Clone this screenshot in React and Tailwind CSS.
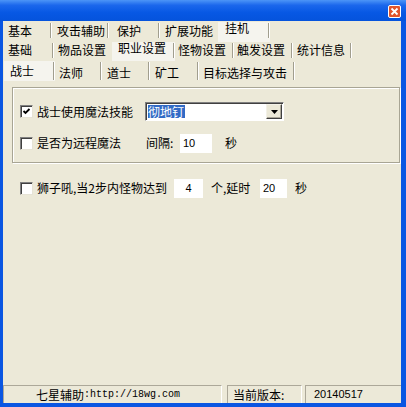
import React from 'react';

const rows = [
  {
    h: 'h-[20px]',
    sep: 'mt-[1px] h-[15px]',
    pt: 'pt-[3px]',
    ptSel: 'pt-[0px]',
    tabs: [
      { label: '基本', w: 'w-[48px]', pl: 'pl-[4px]', sep: true },
      { label: '攻击辅助', w: 'w-[57px]', pl: 'pl-[5px]', sep: true },
      { label: '保护', w: 'w-[51px]', pl: 'pl-[8px]', sep: true },
      { label: '扩展功能', w: 'w-[58px]', pl: 'pl-[5px]' },
      { label: '挂机', w: 'w-[52px]', pl: 'pl-[7px]', sel: true, sep: true },
    ],
  },
  {
    h: 'h-[19px]',
    sep: 'mt-[1px] h-[15px]',
    pt: 'pt-[2px]',
    ptSel: 'pt-[0px]',
    tabs: [
      { label: '基础', w: 'w-[50px]', pl: 'pl-[4px]', sep: true },
      { label: '物品设置', w: 'w-[58px]', pl: 'pl-[4px]' },
      { label: '职业设置', w: 'w-[63px]', pl: 'pl-[6px]', sel: true, sep: true },
      { label: '怪物设置', w: 'w-[59px]', pl: 'pl-[3px]', sep: true },
      { label: '触发设置', w: 'w-[59px]', pl: 'pl-[3px]', sep: true },
      { label: '统计信息', w: 'w-[59px]', pl: 'pl-[4px]', sep: true },
    ],
  },
  {
    h: 'h-[20px]',
    sep: 'mt-[1px] h-[18px]',
    pt: 'pt-[6px]',
    ptSel: 'pt-[4px]',
    tabs: [
      { label: '战士', w: 'w-[51px]', pl: 'pl-[6px]', sel: true, sep: true },
      { label: '法师', w: 'w-[47px]', pl: 'pl-[4px]', sep: true },
      { label: '道士', w: 'w-[48px]', pl: 'pl-[5px]', sep: true },
      { label: '矿工', w: 'w-[49px]', pl: 'pl-[5px]', sep: true },
      { label: '目标选择与攻击', w: 'w-[96px]', pl: 'pl-[4px]', sep: true },
    ],
  },
];

function TabRow({ row }) {
  return (
    <div className={`flex ${row.h}`}>
      {row.tabs.map((t) => (
        <div key={t.label} className={`flex h-full ${t.w} ${t.sel ? 'bg-[#F5F4EE]' : ''}`}>
          <div className={`flex-1 whitespace-nowrap leading-[12px] ${t.pl} ${t.sel ? row.ptSel : row.pt}`}>
            {t.label}
          </div>
          {t.sep && (
            <div className={`flex ${row.sep}`}>
              <div className="w-px bg-[#A19E8E]" />
              <div className="w-px bg-white" />
            </div>
          )}
        </div>
      ))}
    </div>
  );
}

function CheckBox({ checked }) {
  return (
    <div className="w-[13px] h-[13px] shrink-0 bg-white border border-t-[#808080] border-l-[#808080] border-r-[#E6E3D6] border-b-[#E6E3D6] shadow-[inset_1px_1px_0_#404040]">
      {checked && (
        <svg width="11" height="11" viewBox="0 0 11 11">
          <path d="M2.5 5 L4.5 7 L8.5 3" stroke="#000" strokeWidth="1.8" fill="none" />
        </svg>
      )}
    </div>
  );
}

function Edit({ value, w, align }) {
  return (
    <div className={`${w} h-[19px] shrink-0 bg-white flex items-center font-['Liberation_Sans',sans-serif] text-[11px] ${align}`}>
      {value}
    </div>
  );
}

export default function App() {
  return (
    <div className="w-[406px] h-[407px] bg-[#0A56E2] flex flex-col font-['Noto_Sans_CJK_SC',sans-serif] text-[12px] text-black">
      {/* title bar */}
      <div className="h-[21px] shrink-0 flex justify-end pr-[5px] pt-[5px] bg-[linear-gradient(to_bottom,#4C95F7_0%,#1B67EC_25%,#0758E4_60%,#0553DC_100%)]">
        <div className="w-[13px] h-[13px] rounded-[2px] border border-white bg-[#E2552B] flex items-center justify-center">
          <svg width="9" height="9" viewBox="0 0 9 9">
            <path d="M1.5 1.5 L7.5 7.5 M7.5 1.5 L1.5 7.5" stroke="#fff" strokeWidth="1.8" />
          </svg>
        </div>
      </div>

      {/* client */}
      <div className="flex-1 ml-[3px] mr-[5px] mb-[4px] bg-[#ECE9D8] flex flex-col">
        <div className="pl-[1px] pt-[1px] flex flex-col">
          {rows.map((r, i) => (
            <TabRow key={i} row={r} />
          ))}
        </div>

        {/* group box */}
        <div className="ml-[9px] mt-[6px] w-[388px] h-[76px] border border-[#A8A594] shadow-[inset_1px_1px_0_#fff,1px_1px_0_#fff] pl-[7px] pt-[14px] flex flex-col">
          <div className="flex items-center h-[19px]">
            <CheckBox checked />
            <span className="w-[112px] pl-[4px] whitespace-nowrap leading-[12px]">战士使用魔法技能</span>
            <div className="w-[139px] h-[19px] flex bg-white border border-t-[#808080] border-l-[#808080] border-r-white border-b-white shadow-[inset_1px_1px_0_#404040] p-[1px] pl-[2px]">
              <div className="flex-1 flex items-center">
                <span className="bg-[#316AC5] text-white leading-[13px] pr-[1px] whitespace-nowrap">彻地钉</span>
              </div>
              <div className="w-[16px] h-[15px] bg-[#ECE9D8] border border-t-[#F3F1E8] border-l-[#F3F1E8] border-r-[#404040] border-b-[#404040] shadow-[inset_-1px_-1px_0_#ACA899] flex items-center justify-center">
                <svg width="7" height="4" viewBox="0 0 7 4">
                  <path d="M0 0 H7 L3.5 4 Z" fill="#000" />
                </svg>
              </div>
            </div>
          </div>
          <div className="flex items-center h-[20px] mt-[12px]">
            <CheckBox />
            <span className="w-[113px] pl-[4px] whitespace-nowrap leading-[12px]">是否为远程魔法</span>
            <span className="w-[34px] whitespace-nowrap leading-[12px]">间隔:</span>
            <Edit value="10" w="w-[32px]" align="pl-[3px]" />
            <span className="ml-[13px] leading-[12px]">秒</span>
          </div>
        </div>

        {/* lion roar row */}
        <div className="ml-[17px] mt-[14px] h-[22px] flex items-center">
          <CheckBox />
          <span className="w-[141px] pl-[4px] whitespace-nowrap leading-[12px]">狮子吼,当2步内怪物达到</span>
          <Edit value="4" w="w-[29px]" align="justify-center" />
          <span className="w-[57px] pl-[8px] whitespace-nowrap leading-[12px]">个,延时</span>
          <Edit value="20" w="w-[27px]" align="pl-[3px]" />
          <span className="ml-[8px] leading-[12px]">秒</span>
        </div>

        {/* status bar */}
        <div className="mt-auto h-[18px] flex items-stretch">
          <div className="w-[219px] border-t border-l border-t-[#ACA899] border-l-[#ACA899] border-r border-r-white flex items-center pl-[32px] whitespace-nowrap">
            <span className="leading-[12px]">七星辅助</span>
            <span className="font-['Liberation_Mono',monospace] text-[10px] leading-[12px]">:http://18wg.com</span>
          </div>
          <div className="w-[5px]" />
          <div className="w-[75px] border-t border-l border-t-[#ACA899] border-l-[#ACA899] border-r border-r-white flex items-center pl-[5px] whitespace-nowrap leading-[12px]">
            当前版本:
          </div>
          <div className="w-[3px]" />
          <div className="flex-1 border-t border-l border-t-[#ACA899] border-l-[#ACA899] flex items-center pl-[8px] font-['Liberation_Sans',sans-serif] text-[11px]">
            20140517
          </div>
        </div>
      </div>
    </div>
  );
}
